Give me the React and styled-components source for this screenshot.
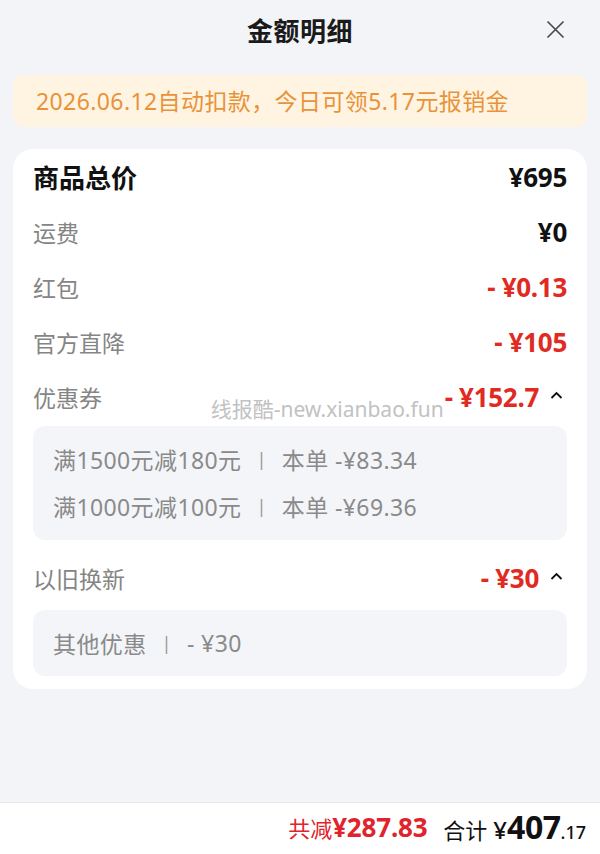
import React from "react";
import styled, { createGlobalStyle } from "styled-components";

const Global = createGlobalStyle`
  html, body { margin: 0; padding: 0; background: #f3f4f8; }
  body { font-family: "Noto Sans", "Noto Sans CJK SC", sans-serif; }
  * { box-sizing: border-box; }
`;

const Page = styled.div`
  width: 600px;
  height: 854px;
  background: #f3f4f8;
  display: flex;
  flex-direction: column;
  overflow: hidden;
`;

const Header = styled.div`
  height: 62px;
  display: grid;
  grid-template-columns: 60px 1fr 60px;
  align-items: center;
`;

const Title = styled.h1`
  grid-column: 2;
  margin: 0;
  text-align: center;
  font-size: 26px;
  font-weight: 700;
  color: #1a1a1a;
  letter-spacing: 0.5px;
  padding-bottom: 2px;
`;

const CloseBtn = styled.button`
  grid-column: 3;
  justify-self: start;
  width: 22px;
  height: 22px;
  margin-left: 4px;
  padding: 0;
  border: none;
  background: transparent;
  display: flex;
  align-items: center;
  justify-content: center;
  transform: translateY(-2px);
`;

const Banner = styled.div`
  margin: 13px 13px 0;
  height: 52px;
  border-radius: 10px;
  background: #fff3e1;
  color: #e8933a;
  font-size: 23px;
  letter-spacing: 0.4px;
  display: flex;
  align-items: center;
  padding: 0 23px 3px;
`;

const Card = styled.div`
  margin: 22px 13px 0;
  background: #ffffff;
  border-radius: 20px;
  padding: 2px 20px 13px;
  display: flex;
  flex-direction: column;
`;

const Row = styled.div`
  height: 55px;
  display: flex;
  align-items: center;
  justify-content: space-between;
  padding-bottom: 3px;
  margin-top: ${(p) => (p.$gap ? "12px" : "0")};
`;

const Label = styled.span`
  font-size: ${(p) => (p.$main ? "26px" : "23px")};
  font-weight: ${(p) => (p.$main ? 700 : 400)};
  color: ${(p) => (p.$main ? "#111" : "#858585")};
`;

const ValueGroup = styled.div`
  display: flex;
  align-items: center;
`;

const Value = styled.span`
  font-size: 26px;
  font-weight: 700;
  color: ${(p) => (p.$red ? "#e02a22" : "#111")};
  letter-spacing: -0.3px;
`;

const Watermark = styled.span`
  font-size: 21px;
  color: #c2c2c2;
  align-self: flex-end;
  margin-bottom: -8px;
  margin-right: 1px;
`;

const Caret = styled.span`
  display: flex;
  margin-left: 11px;
  margin-right: 4px;
  transform: translateY(-2px);
`;

const SubBox = styled.div`
  background: #f4f5f8;
  border-radius: 12px;
  padding: ${(p) => p.$pad || "10px 20px"};
  margin-top: ${(p) => p.$mt || "0"};
  display: flex;
  flex-direction: column;
`;

const SubLine = styled.div`
  height: 47px;
  display: flex;
  align-items: center;
  font-size: 23px;
  letter-spacing: 0.4px;
  color: #8a8a8a;
  white-space: pre;
  padding-bottom: 2px;
`;

const Sep = styled.span`
  margin: 0 15px;
  color: #9a9a9a;
  font-size: 18px;
`;

const Spacer = styled.div`
  flex: 1;
`;

const Footer = styled.div`
  height: 52px;
  background: #fff;
  border-top: 1px solid #e6e7ea;
  display: flex;
  align-items: center;
  justify-content: flex-end;
  padding: 0 14px 4px 0;
  gap: 16px;
`;

const Saved = styled.span`
  color: #e0232c;
  font-size: 22px;
  display: flex;
  align-items: baseline;
`;

const SavedNum = styled.span`
  font-size: 26px;
  font-weight: 700;
  letter-spacing: -0.2px;
`;

const Total = styled.span`
  display: flex;
  align-items: baseline;
  color: #111;
  font-size: 22px;
`;

const TotalYen = styled.span`
  font-size: 24px;
  font-weight: 500;
  margin-left: 6px;
`;

const TotalBig = styled.span`
  font-size: 32px;
  font-weight: 700;
  letter-spacing: -0.5px;
`;

const TotalSmall = styled.span`
  font-size: 18px;
  font-weight: 500;
`;

const CaretIcon = () => (
  <svg width="13" height="8" viewBox="0 0 13 8">
    <path d="M1.5 7 L6.5 2 L11.5 7" fill="none" stroke="#111" strokeWidth="1.8" />
  </svg>
);

const CloseIcon = () => (
  <svg width="19" height="19" viewBox="0 0 19 19">
    <path d="M1.5 1.5 L17.5 17.5 M17.5 1.5 L1.5 17.5" stroke="#4a4a4a" strokeWidth="1.7" fill="none" />
  </svg>
);

export default function App() {
  return (
    <>
      <Global />
      <Page>
        <Header>
          <Title>金额明细</Title>
          <CloseBtn aria-label="关闭">
            <CloseIcon />
          </CloseBtn>
        </Header>
        <Banner>2026.06.12自动扣款，今日可领5.17元报销金</Banner>
        <Card>
          <Row>
            <Label $main>商品总价</Label>
            <Value>¥695</Value>
          </Row>
          <Row>
            <Label>运费</Label>
            <Value>¥0</Value>
          </Row>
          <Row>
            <Label>红包</Label>
            <Value $red>- ¥0.13</Value>
          </Row>
          <Row>
            <Label>官方直降</Label>
            <Value $red>- ¥105</Value>
          </Row>
          <Row>
            <Label>优惠券</Label>
            <ValueGroup>
              <Watermark>线报酷-new.xianbao.fun</Watermark>
              <Value $red>- ¥152.7</Value>
              <Caret>
                <CaretIcon />
              </Caret>
            </ValueGroup>
          </Row>
          <SubBox>
            <SubLine>
              满1500元减180元<Sep>|</Sep>本单 -¥83.34
            </SubLine>
            <SubLine>
              满1000元减100元<Sep>|</Sep>本单 -¥69.36
            </SubLine>
          </SubBox>
          <Row $gap>
            <Label>以旧换新</Label>
            <ValueGroup>
              <Value $red>- ¥30</Value>
              <Caret>
                <CaretIcon />
              </Caret>
            </ValueGroup>
          </Row>
          <SubBox $mt="3px" $pad="10px 20px 9px">
            <SubLine>
              其他优惠<Sep>|</Sep>- ¥30
            </SubLine>
          </SubBox>
        </Card>
        <Spacer />
        <Footer>
          <Saved>
            共减<SavedNum>¥287.83</SavedNum>
          </Saved>
          <Total>
            合计<TotalYen>¥</TotalYen>
            <TotalBig>407</TotalBig>
            <TotalSmall>.17</TotalSmall>
          </Total>
        </Footer>
      </Page>
    </>
  );
}
